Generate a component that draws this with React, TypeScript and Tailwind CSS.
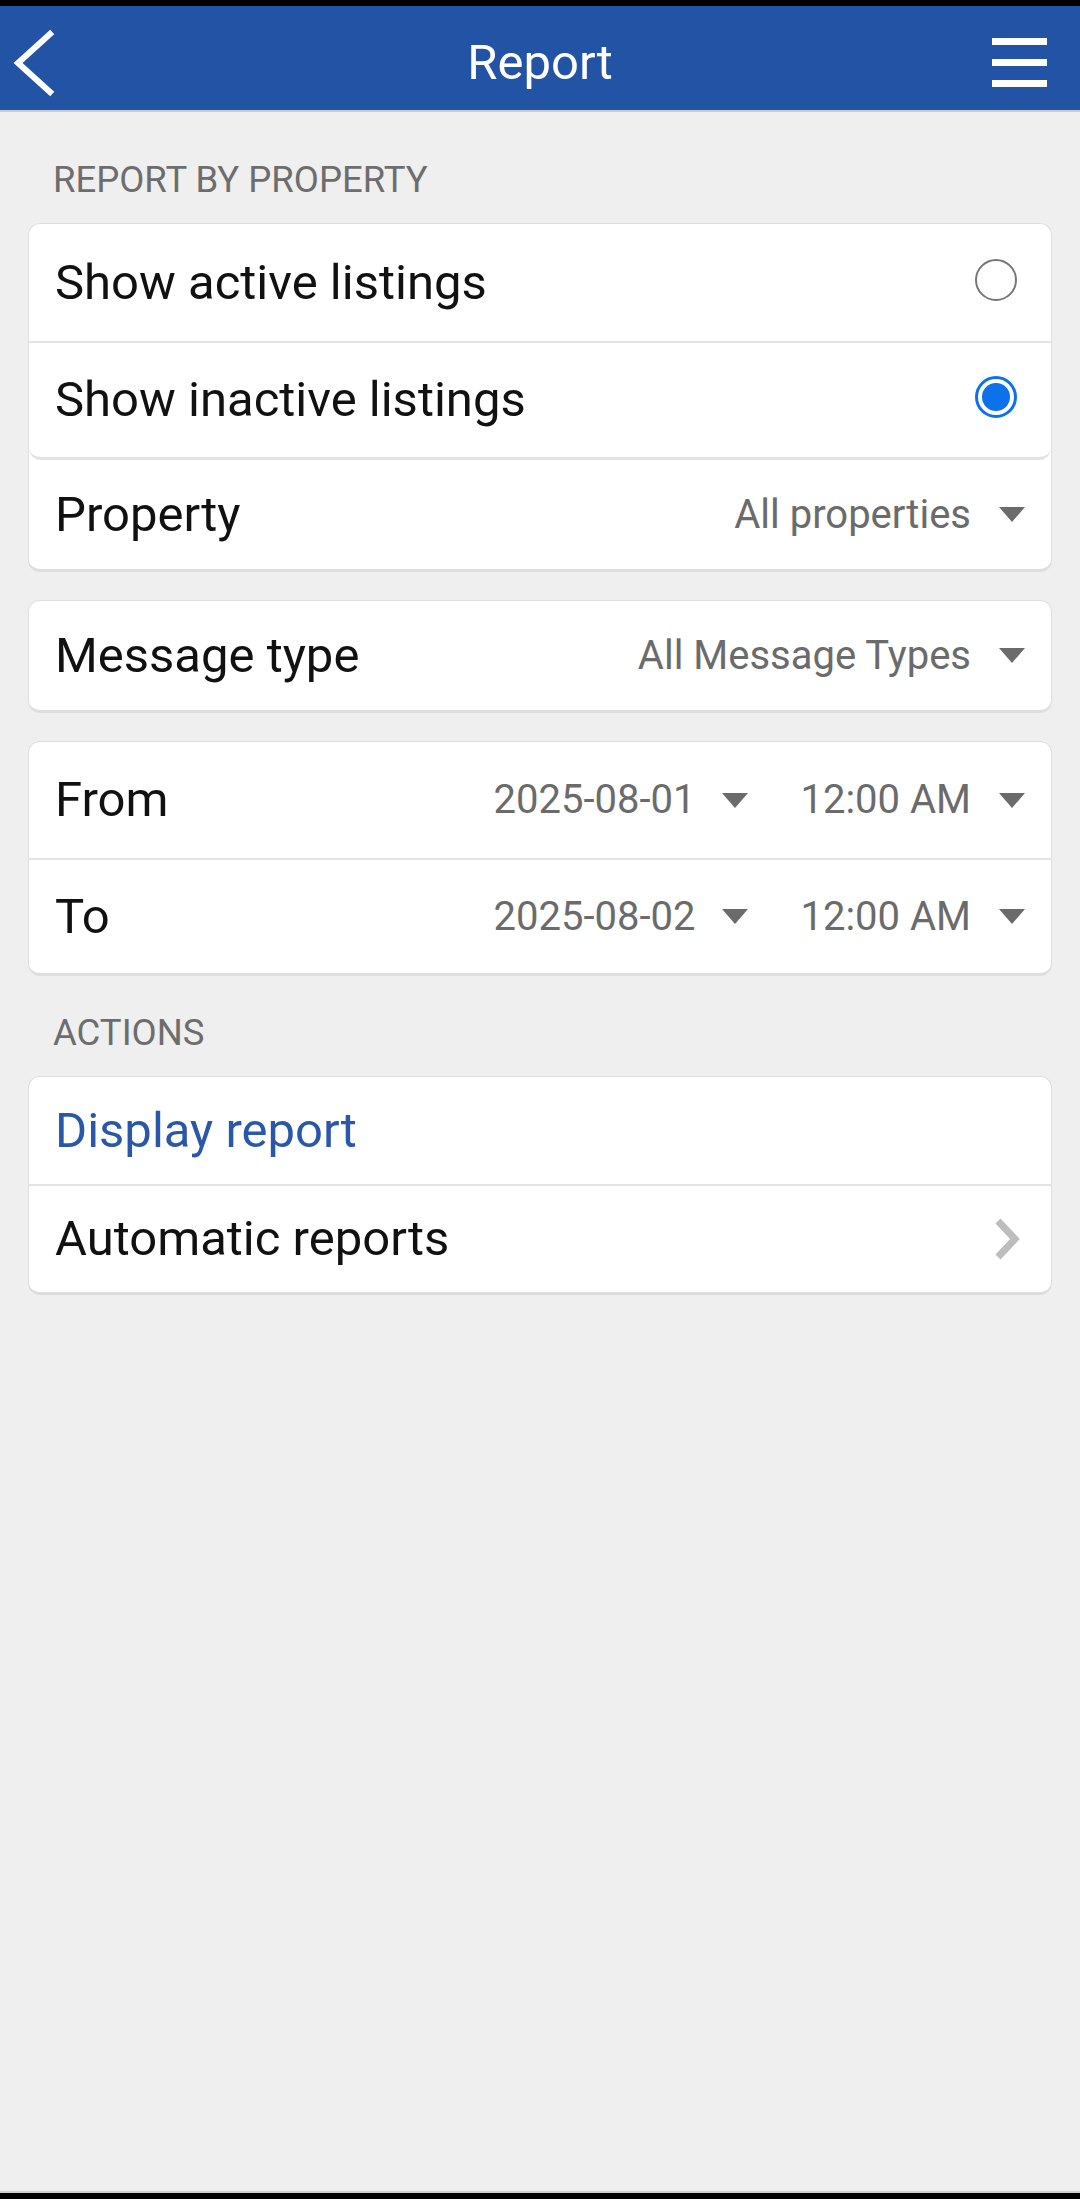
import React from "react";

const Caret = () => (
  <svg width="26" height="15" viewBox="0 0 26 15" className="shrink-0">
    <polygon points="0,0 26,0 13,15" fill="#6b6b6b" />
  </svg>
);

const SectionLabel = ({ text, top }: { text: string; top: string }) => (
  <div className={`${top} pb-[21px] px-[53px] text-[36.5px] leading-[44px] text-[#6d6d6d]`}>{text}</div>
);

const RadioRow = ({ label, checked, h }: { label: string; checked: boolean; h: string }) => (
  <div className={`flex items-center justify-between ${h} pl-[26px] pr-[34px]`}>
    <span className="text-[49px] text-[#111]">{label}</span>
    {checked ? (
      <span className="mb-[6px] w-[42px] h-[42px] rounded-full border-[3px] border-[#0b72ea] flex items-center justify-center">
        <span className="w-[28px] h-[28px] rounded-full bg-[#0b72ea]" />
      </span>
    ) : (
      <span className="mb-[6px] w-[42px] h-[42px] rounded-full border-[2.5px] border-[#777]" />
    )}
  </div>
);

const SelectRow = ({ label, value, h }: { label: string; value: string; h: string }) => (
  <div className={`flex items-center justify-between ${h} pl-[26px] pr-[26px]`}>
    <span className="text-[49px] text-[#111]">{label}</span>
    <div className="flex items-center gap-[28px]">
      <span className="text-[40px] text-[#6b6b6b]">{value}</span>
      <Caret />
    </div>
  </div>
);

const DateRow = ({ label, date, time, h }: { label: string; date: string; time: string; h: string }) => (
  <div className={`flex items-center justify-between ${h} pl-[26px] pr-[26px]`}>
    <span className="text-[49px] text-[#111]">{label}</span>
    <div className="flex items-center">
      <span className="text-[40px] text-[#6b6b6b]">{date}</span>
      <span className="ml-[27px] mr-[52px]"><Caret /></span>
      <span className="text-[40px] text-[#6b6b6b]">{time}</span>
      <span className="ml-[28px]"><Caret /></span>
    </div>
  </div>
);

export default function App() {
  return (
    <div
      className="w-[1080px] h-[2199px] bg-[#efefef] flex flex-col"
      style={{ fontFamily: "Roboto, 'Liberation Sans', sans-serif" }}
    >
      {/* status strip + app bar */}
      <div className="h-[6px] bg-black" />
      <div className="h-[104px] bg-[#2253a5] pt-[9px] grid grid-cols-[120px_1fr_120px] items-center">
        <svg width="60" height="70" viewBox="0 0 60 70" className="ml-[4px]">
          <polyline points="46,6 14,35 46,64" fill="none" stroke="#fff" strokeWidth="6" strokeLinecap="square" />
        </svg>
        <span className="text-[49px] text-white text-center">Report</span>
        <div className="flex flex-col gap-[14px] w-[55px] ml-auto mr-[33px]">
          <span className="h-[7px] bg-white" />
          <span className="h-[7px] bg-white" />
          <span className="h-[7px] bg-white" />
        </div>
      </div>
      <div className="h-[2px] bg-[#c9ccd3]" />

      <main className="flex-1 flex flex-col">
        <SectionLabel text="REPORT BY PROPERTY" top="pt-[46px]" />
        <div className="mx-[28px] bg-white rounded-[12px] border border-[#dedede] border-b-[3px] overflow-hidden">
          <div className="rounded-b-[12px] border-b-[3px] border-[#e2e2e2]">
            <RadioRow label="Show active listings" checked={false} h="h-[117px]" />
            <div className="h-[2px] bg-[#e3e3e3]" />
            <RadioRow label="Show inactive listings" checked={true} h="h-[114px]" />
          </div>
          <SelectRow label="Property" value="All properties" h="h-[109px]" />
        </div>

        <div className="mt-[28px] mx-[28px] bg-white rounded-[12px] border border-[#dedede] border-b-[3px]">
          <SelectRow label="Message type" value="All Message Types" h="h-[109px]" />
        </div>

        <div className="mt-[28px] mx-[28px] bg-white rounded-[12px] border border-[#dedede] border-b-[3px]">
          <DateRow label="From" date="2025-08-01" time="12:00 AM" h="h-[116px]" />
          <div className="h-[2px] bg-[#e3e3e3]" />
          <DateRow label="To" date="2025-08-02" time="12:00 AM" h="h-[113px]" />
        </div>

        <SectionLabel text="ACTIONS" top="pt-[35px]" />
        <div className="mx-[28px] bg-white rounded-[12px] border border-[#dedede] border-b-[3px]">
          <div className="flex items-center h-[107px] pl-[26px]">
            <span className="text-[49px] text-[#2a58a8]">Display report</span>
          </div>
          <div className="h-[2px] bg-[#e3e3e3]" />
          <div className="flex items-center justify-between h-[106px] pl-[26px] pr-[30px]">
            <span className="text-[49px] text-[#111]">Automatic reports</span>
            <svg width="28" height="44" viewBox="0 0 28 44">
              <polyline points="5,4 22,22 5,40" fill="none" stroke="#bdbdbd" strokeWidth="7" />
            </svg>
          </div>
        </div>
      </main>

      <div className="h-[2px] bg-[#cfcfcf]" />
      <div className="h-[6px] bg-black" />
    </div>
  );
}
